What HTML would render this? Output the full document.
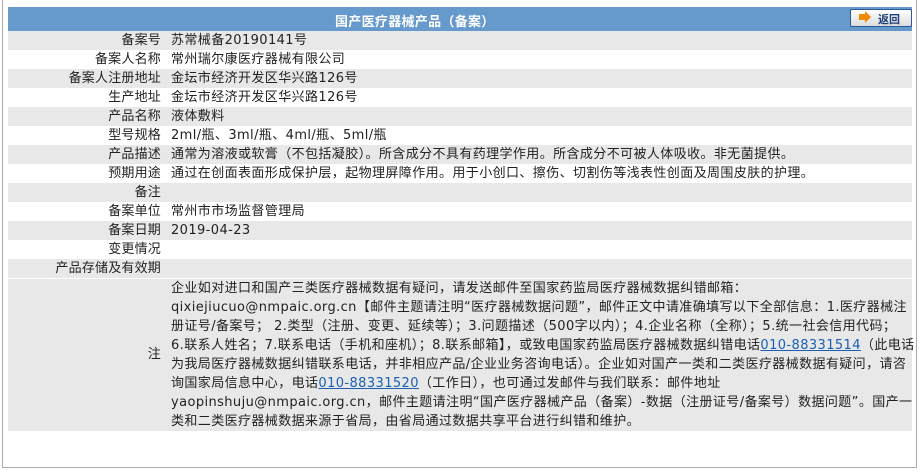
<!DOCTYPE html>
<html><head><meta charset="utf-8"><style>
body{margin:0;width:924px;height:474px;background:#fff;font-family:"DejaVu Sans","Noto Sans CJK SC",sans-serif;font-size:13px;color:#222;position:relative;overflow:hidden;letter-spacing:0.4px}
.frame{position:absolute;left:2px;top:-2px;width:913px;height:469px;border:1px solid #aaa;border-top:none}
.hdr{position:absolute;left:8px;top:7px;width:904px;height:24px;background:#6699cc}
.hdr .t{position:absolute;left:327px;top:4px;color:#fff;font-weight:bold;font-size:13px;letter-spacing:0.3px}
.btn{position:absolute;left:850px;top:9px;width:60px;height:16px;border:1px solid #2a5a9a;border-radius:2px;background:linear-gradient(#fff,#dcdcdc);font-size:11px;font-weight:bold;color:#1a3f7a;letter-spacing:0}
.btn .a{position:absolute;left:8px;top:4px;width:6px;height:6px;background:#f08a00}
.btn .a:after{content:"";position:absolute;left:6px;top:-3px;border-left:6px solid #f08a00;border-top:6px solid transparent;border-bottom:6px solid transparent}
.btn span{position:absolute;left:27px;top:1px}
.row{position:absolute;left:8px;width:904px;height:19px;line-height:19px}
.g{background:#e8e8e8}
.l{position:absolute;right:751px;white-space:nowrap;letter-spacing:0.2px}
.v{position:absolute;left:163px;white-space:nowrap}
.note{position:absolute;left:8px;top:279px;width:904px;height:152px;background:#e8e8e8;line-height:19px}
.note .l{top:66px}
.note .v{top:0}
a{color:#1a5fb4;text-decoration:underline}
</style></head><body>
<div class="frame"></div>
<div class="hdr"><div class="t">国产医疗器械产品（备案）</div></div>
<div class="btn"><div class="a"></div><span>返回</span></div>
<div class="row g" style="top:31px"><span class="l">备案号</span><span class="v">苏常械备20190141号</span></div>
<div class="row" style="top:50px"><span class="l">备案人名称</span><span class="v">常州瑞尔康医疗器械有限公司</span></div>
<div class="row g" style="top:69px"><span class="l">备案人注册地址</span><span class="v">金坛市经济开发区华兴路126号</span></div>
<div class="row" style="top:88px"><span class="l">生产地址</span><span class="v">金坛市经济开发区华兴路126号</span></div>
<div class="row g" style="top:107px"><span class="l">产品名称</span><span class="v">液体敷料</span></div>
<div class="row" style="top:126px"><span class="l">型号规格</span><span class="v">2ml/瓶、3ml/瓶、4ml/瓶、5ml/瓶</span></div>
<div class="row g" style="top:145px"><span class="l">产品描述</span><span class="v">通常为溶液或软膏（不包括凝胶）。所含成分不具有药理学作用。所含成分不可被人体吸收。非无菌提供。</span></div>
<div class="row" style="top:164px"><span class="l">预期用途</span><span class="v">通过在创面表面形成保护层，起物理屏障作用。用于小创口、擦伤、切割伤等浅表性创面及周围皮肤的护理。</span></div>
<div class="row g" style="top:183px"><span class="l">备注</span></div>
<div class="row" style="top:202px"><span class="l">备案单位</span><span class="v">常州市市场监督管理局</span></div>
<div class="row g" style="top:221px"><span class="l">备案日期</span><span class="v">2019-04-23</span></div>
<div class="row" style="top:240px"><span class="l">变更情况</span></div>
<div class="row g" style="top:259px"><span class="l">产品存储及有效期</span></div>
<div class="note"><span class="l">注</span><div class="v">企业如对进口和国产三类医疗器械数据有疑问，请发送邮件至国家药监局医疗器械数据纠错邮箱：<br>qixiejiucuo@nmpaic.org.cn【邮件主题请注明“医疗器械数据问题”，邮件正文中请准确填写以下全部信息：1.医疗器械注<br>册证号/备案号； 2.类型（注册、变更、延续等）；3.问题描述（500字以内）；4.企业名称（全称）；5.统一社会信用代码；<br>6.联系人姓名；7.联系电话（手机和座机）；8.联系邮箱】，或致电国家药监局医疗器械数据纠错电话<a>010-88331514</a>（此电话<br>为我局医疗器械数据纠错联系电话，并非相应产品/企业业务咨询电话）。企业如对国产一类和二类医疗器械数据有疑问，请咨<br>询国家局信息中心，电话<a>010-88331520</a>（工作日），也可通过发邮件与我们联系：邮件地址<br>yaopinshuju@nmpaic.org.cn，邮件主题请注明“国产医疗器械产品（备案）-数据（注册证号/备案号）数据问题”。国产一<br>类和二类医疗器械数据来源于省局，由省局通过数据共享平台进行纠错和维护。</div></div>
</body></html>
